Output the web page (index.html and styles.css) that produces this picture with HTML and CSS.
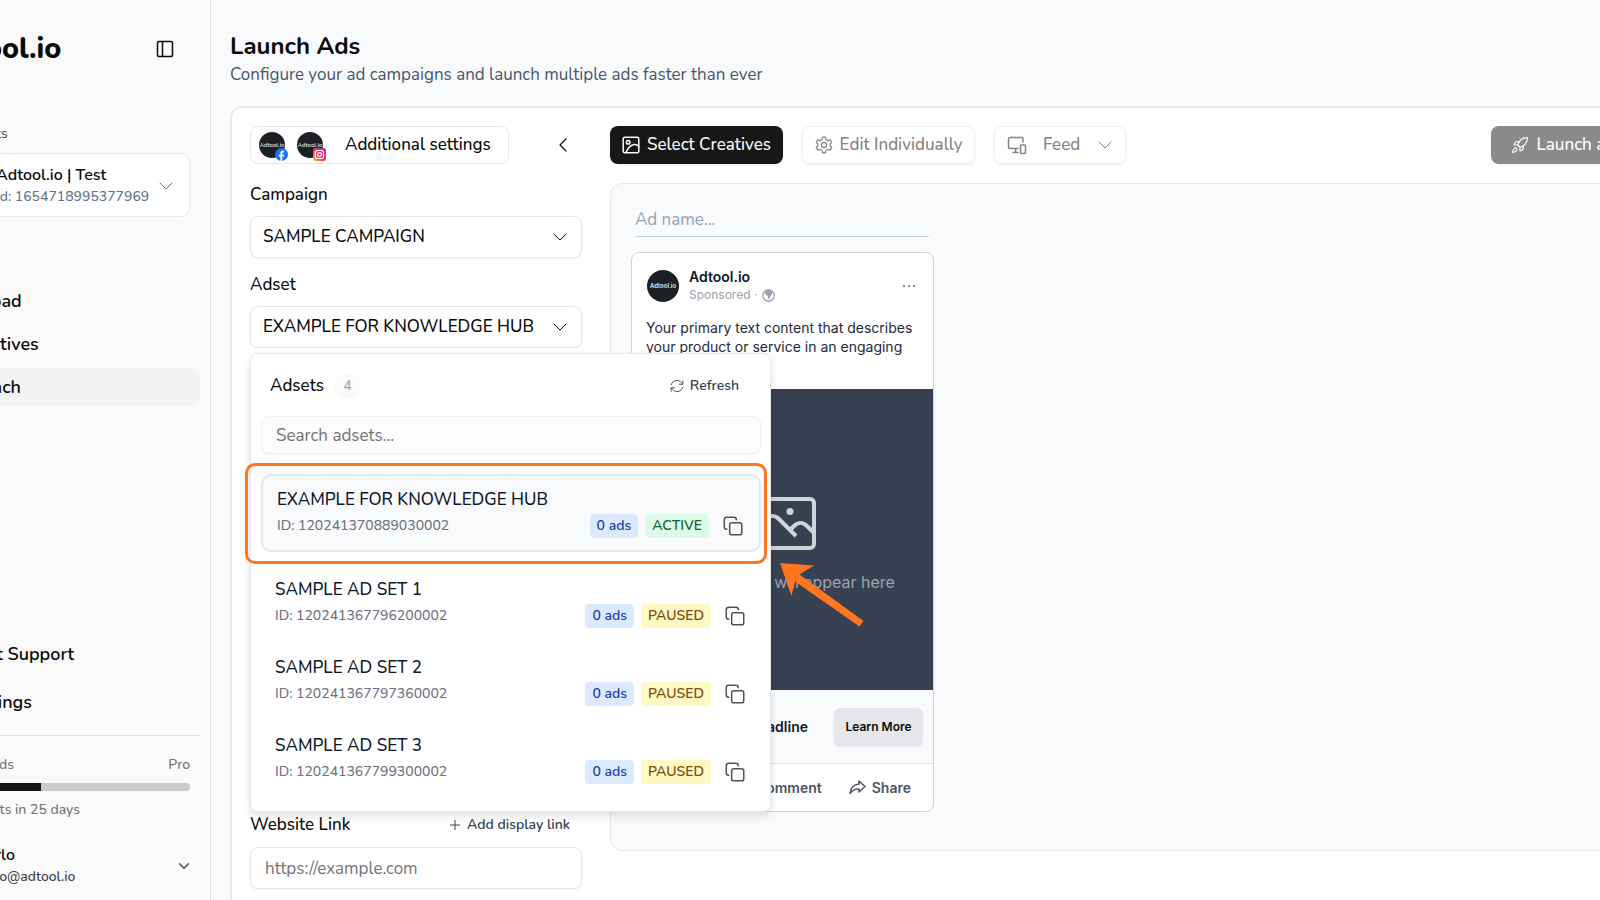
FILE: index.html
```html
<!DOCTYPE html>
<html lang="en">
<head>
    <meta charset="UTF-8">
    <meta name="viewport" content="width=device-width, initial-scale=1.0">
    <title>Adtool.io - Launch Ads</title>
    <link rel="stylesheet" href="styles.css">
</head>
<body>
    <!-- shared icons -->
    <svg class="sprite" aria-hidden="true">
        <symbol id="chevron-down" viewBox="0 0 24 24"><path d="M3 7.5l9 9 9-9"/></symbol>
        <symbol id="copy" viewBox="0 0 24 24"><rect x="8" y="8" width="14.5" height="14.5" rx="2.5"/><path d="M4.500 16c-1.700 0-3-1.300-3-3V4.500c0-1.700 1.300-3 3-3H13c1.700 0 3 1.300 3 3"/></symbol>
    </svg>

    <div class="app">
        <aside class="sidebar">
            <div class="brand">
                <a href="#" class="logo">Adtool.io</a>
                <button type="button" class="icon-btn" aria-label="Toggle sidebar">
                    <svg class="icon" width="18" height="18" viewBox="0 0 18 18"><rect x="1.500" y="1.500" width="15" height="15" rx="1.500"/><path d="M6.500 1.500v15"/></svg>
                </button>
            </div>

            <p class="section-label">Ad accounts</p>
            <button type="button" class="account">
                <span class="account-text">
                    <span class="account-name">Adtool.io | Test</span>
                    <span class="account-id">Id: 1654718995377969</span>
                </span>
                <svg class="icon" width="16" height="16"><use href="#chevron-down"/></svg>
            </button>

            <nav class="nav">
                <a href="#">Upload</a>
                <a href="#">Creatives</a>
                <a href="#" class="active">Launch</a>
            </nav>

            <nav class="nav nav-bottom">
                <a href="#">Chat Support</a>
                <a href="#">Settings</a>
            </nav>

            <div class="usage">
                <div class="usage-head"><span>Launched Ads</span><span>Pro</span></div>
                <div class="bar"><div class="bar-fill" style="width: 44%"></div></div>
                <p>Credits resets in 25 days</p>
            </div>

            <button type="button" class="user">
                <span class="user-text">
                    <span class="user-name">Carlo</span>
                    <span class="user-mail">carlo@adtool.io</span>
                </span>
                <svg class="icon" width="12" height="12"><use href="#chevron-down"/></svg>
            </button>
        </aside>

        <main class="main">
            <h1>Launch Ads</h1>
            <p class="subtitle">Configure your ad campaigns and launch multiple ads faster than ever</p>

            <div class="panel">
                <div class="settings">
                    <div class="settings-head">
                        <button type="button" class="additional">
                            <span class="avatar">Adtool.io
                                <svg class="social" width="13" height="13" viewBox="0 0 24 24"><circle cx="12" cy="12" r="12" fill="#1877f2"/><path d="M10 24v-8.500H7V12h3V9.500C10 6.500 11.800 5 14.400 5c1.200 0 2.200.200 2.200.200v2.900h-1.400c-1.500 0-1.900.900-1.900 1.800V12h3.200l-.500 3.500h-2.700V24z" fill="#fff"/></svg>
                            </span>
                            <span class="avatar">Adtool.io
                                <svg class="social" width="13" height="13" viewBox="0 0 24 24">
                                    <defs><linearGradient id="insta" x1="0" y1="1" x2="1" y2="0"><stop offset="0" stop-color="#ffc14a"/><stop offset=".45" stop-color="#f9354a"/><stop offset="1" stop-color="#9b2be0"/></linearGradient></defs>
                                    <rect width="24" height="24" rx="5" fill="url(#insta)"/>
                                    <g fill="none" stroke="#fff" stroke-width="2"><rect x="4.500" y="4.500" width="15" height="15" rx="4"/><circle cx="12" cy="12" r="3.500"/></g>
                                </svg>
                            </span>
                            <span class="additional-label">Additional settings</span>
                        </button>
                        <button type="button" class="icon-btn" aria-label="Collapse settings">
                            <svg class="icon" width="16" height="16" viewBox="0 0 16 16"><path d="M11 2L5 8l6 6"/></svg>
                        </button>
                    </div>

                    <div class="field">
                        <label for="campaign">Campaign</label>
                        <div class="select">
                            <select id="campaign"><option>SAMPLE CAMPAIGN</option></select>
                            <svg class="icon" width="16" height="16"><use href="#chevron-down"/></svg>
                        </div>
                    </div>

                    <div class="field">
                        <label for="adset">Adset</label>
                        <div class="select">
                            <select id="adset"><option>EXAMPLE FOR KNOWLEDGE HUB</option></select>
                            <svg class="icon" width="16" height="16"><use href="#chevron-down"/></svg>
                        </div>

                        <div class="dropdown">
                            <div class="dropdown-head">
                                <span>Adsets</span>
                                <span class="count">4</span>
                                <button type="button" class="refresh">
                                    <svg class="icon" width="14" height="14" viewBox="0 0 24 24"><path d="M2 10C3 5.500 7 2.500 12 2.500c4.300 0 7 2.500 9.500 6M22 3v6h-6M22 14c-1 4.500-5 7.500-10 7.500-4.300 0-7-2.500-9.500-6M2 21v-6h6"/></svg>
                                    Refresh
                                </button>
                            </div>
                            <input type="text" class="search" placeholder="Search adsets..." aria-label="Search adsets">
                            <ul class="adsets">
                                <li class="adset selected">
                                    <p class="adset-name">EXAMPLE FOR KNOWLEDGE HUB</p>
                                    <div class="adset-meta">
                                        <span class="adset-id">ID: 120241370889030002</span>
                                        <span class="badge ads">0 ads</span>
                                        <span class="badge on">ACTIVE</span>
                                        <button type="button" class="icon-btn" aria-label="Copy ID"><svg class="icon" width="20" height="20"><use href="#copy"/></svg></button>
                                    </div>
                                </li>
                                <li class="adset">
                                    <p class="adset-name">SAMPLE AD SET 1</p>
                                    <div class="adset-meta">
                                        <span class="adset-id">ID: 120241367796200002</span>
                                        <span class="badge ads">0 ads</span>
                                        <span class="badge paused">PAUSED</span>
                                        <button type="button" class="icon-btn" aria-label="Copy ID"><svg class="icon" width="20" height="20"><use href="#copy"/></svg></button>
                                    </div>
                                </li>
                                <li class="adset">
                                    <p class="adset-name">SAMPLE AD SET 2</p>
                                    <div class="adset-meta">
                                        <span class="adset-id">ID: 120241367797360002</span>
                                        <span class="badge ads">0 ads</span>
                                        <span class="badge paused">PAUSED</span>
                                        <button type="button" class="icon-btn" aria-label="Copy ID"><svg class="icon" width="20" height="20"><use href="#copy"/></svg></button>
                                    </div>
                                </li>
                                <li class="adset">
                                    <p class="adset-name">SAMPLE AD SET 3</p>
                                    <div class="adset-meta">
                                        <span class="adset-id">ID: 120241367799300002</span>
                                        <span class="badge ads">0 ads</span>
                                        <span class="badge paused">PAUSED</span>
                                        <button type="button" class="icon-btn" aria-label="Copy ID"><svg class="icon" width="20" height="20"><use href="#copy"/></svg></button>
                                    </div>
                                </li>
                            </ul>
                            <div class="highlight"></div>
                            <svg class="arrow" width="86" height="66" viewBox="0 0 86 66"><path d="M1 1l34 2.500-14.500 9L84.500 59l-4 5.500L16 19.500 12.500 34z" fill="#ff761f"/></svg>
                        </div>
                    </div>

                    <div class="field website">
                        <div class="website-head">
                            <label for="website">Website Link</label>
                            <button type="button" class="add-link">
                                <svg class="icon" width="10" height="10" viewBox="0 0 10 10"><path d="M5 0v10M0 5h10"/></svg>
                                Add display link
                            </button>
                        </div>
                        <input type="text" id="website" placeholder="https://example.com">
                    </div>
                </div>

                <div class="workspace">
                    <div class="toolbar">
                        <button type="button" class="btn dark">
                            <svg class="icon" width="18" height="18" viewBox="0 0 18 18"><rect x="1.200" y="1.200" width="15.600" height="15.600" rx="1.500"/><circle cx="6.200" cy="6.200" r="1.800"/><path d="M4 16.500C6 12 9 9 12 8.500c2-.300 3.500.500 4.800 2"/></svg>
                            Select Creatives
                        </button>
                        <button type="button" class="btn muted">
                            <svg class="icon" width="18" height="18" viewBox="0 0 24 24"><path d="M10 1.500h4l.700 3.200 2.500 1.500 3.200-1 2 3.500L20 11v2l2.400 2.300-2 3.500-3.200-1-2.500 1.500-.700 3.200h-4l-.700-3.200-2.500-1.500-3.200 1-2-3.500L4 13v-2L1.600 8.700l2-3.500 3.200 1 2.500-1.500z"/><circle cx="12" cy="12" r="3.500"/></svg>
                            Edit Individually
                        </button>
                        <div class="feed">
                            <svg class="icon" width="20" height="20" viewBox="0 0 20 20"><path d="M11 13.500H3c-1 0-1.500-.500-1.500-1.500V4c0-1 .500-1.500 1.500-1.500h11.500c1 0 1.500.500 1.500 1.500v3M8.500 13.500v4M6 17.500h5"/><rect x="13.500" y="10" width="5" height="8.500" rx="1"/></svg>
                            <select aria-label="Placement"><option>Feed</option></select>
                            <svg class="icon" width="16" height="16"><use href="#chevron-down"/></svg>
                        </div>
                        <button type="button" class="btn launch">
                            <svg class="icon" width="18" height="18" viewBox="0 0 24 24"><path d="M9 12c1.500-5 6-10 13-10 0 6.500-4.500 11.500-10 13zM9 12H4c.500-3 3-5 7-4.500M12 15v5c3-.500 5-3 4.500-7M9 12l3 3M4.500 16.500C2.500 18 2 22 2 22s4-.500 5.500-2.500c.900-1.200.700-2.300-.100-3-.800-.800-2-.800-2.900 0z"/></svg>
                            Launch ads
                        </button>
                    </div>

                    <div class="preview">
                        <input type="text" class="ad-name" placeholder="Ad name..." aria-label="Ad name">
                        <article class="ad">
                            <header class="ad-head">
                                <span class="avatar large">Adtool.io</span>
                                <div class="ad-title">
                                    <strong>Adtool.io</strong>
                                    <span class="sponsored">Sponsored · <svg width="13" height="13" viewBox="0 0 12 12"><circle cx="6" cy="6" r="5.300" fill="none" stroke="#9ca3af" stroke-width="1.200"/><path d="M2.500 2.500L6 1l3.500 1.500L9 5 7.500 7 7 9.500 5.500 8.500V6.500L3 5z" fill="#9ca3af"/></svg></span>
                                </div>
                                <svg class="dots" width="14" height="4" viewBox="0 0 14 4" fill="#64748b"><circle cx="2" cy="2" r="1.100"/><circle cx="7" cy="2" r="1.100"/><circle cx="12" cy="2" r="1.100"/></svg>
                            </header>
                            <p class="ad-text">Your primary text content that describes your product or service in an engaging way</p>
                            <div class="ad-media">
                                <svg width="66" height="53" viewBox="0 0 66 53" fill="none" stroke="#d1d5db" stroke-width="4"><rect x="2" y="2" width="62" height="49" rx="4"/><circle cx="40" cy="14.500" r="3.500" fill="#d1d5db" stroke="none"/><path d="M3 36l13-14c4-4 9-4 13 0l17 17M40 33l4-4c4-4 9-4 13 0l7 7"/></svg>
                                <p>Your creative will appear here</p>
                            </div>
                            <div class="ad-cta">
                                <strong>Your Headline</strong>
                                <button type="button">Learn More</button>
                            </div>
                            <footer class="ad-actions">
                                <a href="#">Like</a>
                                <a href="#">Comment</a>
                                <a href="#"><svg class="icon" width="17" height="15" viewBox="0 0 17 15"><path d="M10 1l6 5.500-6 5.500V9C6 8.500 3.500 10 1 13.500 1.500 8.500 4.500 4.500 10 4z"/></svg>Share</a>
                            </footer>
                        </article>
                    </div>
                </div>
            </div>
        </main>
    </div>
</body>
</html>
```
FILE: styles.css
```css
* {
    margin: 0;
    padding: 0;
    box-sizing: border-box;
}

body {
    font-family: Nunito, Lato, sans-serif;
    font-size: 17px;
    line-height: 20px;
    font-weight: 500;
    color: #0a0a0a;
    background-color: #f8fafc;
    overflow: hidden;
}

button,
input,
select {
    font: inherit;
    color: inherit;
    background: none;
    border: none;
}

button {
    cursor: pointer;
}

input {
    font-weight: 400;
}

a {
    color: inherit;
    text-decoration: none;
}

.sprite {
    position: absolute;
    width: 0;
    height: 0;
}

.icon {
    flex: none;
    fill: none;
    stroke: currentColor;
    stroke-width: 1.5;
    stroke-linecap: round;
    stroke-linejoin: round;
}

.icon-btn {
    display: flex;
    align-items: center;
    justify-content: center;
    width: 24px;
    height: 24px;
}

.app {
    display: flex;
    height: 100vh;
    overflow: hidden;
}

/* Sidebar */
.sidebar {
    flex: none;
    display: flex;
    flex-direction: column;
    width: 311px;
    margin-left: -100px;
    padding: 29px 10px 13px;
    background-color: #fafafa;
    border-right: 1px solid #dfe1e6;
}

.brand {
    display: flex;
    align-items: center;
    justify-content: space-between;
    height: 40px;
    padding: 0 23px 0 24px;
}

.logo {
    font-size: 29px;
    font-weight: 800;
}

.section-label {
    margin-top: 55px;
    padding-left: 20px;
    font-size: 14px;
    color: #525252;
}

.account {
    display: flex;
    align-items: center;
    justify-content: space-between;
    height: 64px;
    margin: 9px 10px 0;
    padding: 2px 15px 0 75px;
    text-align: left;
    background-color: #fff;
    border: 1px solid #e5e7eb;
    border-radius: 10px;
}

.account-text,
.user-text {
    display: flex;
    flex-direction: column;
    gap: 2px;
}

.account-name,
.user-name {
    font-size: 16px;
    font-weight: 600;
}

.account-id,
.account .icon {
    color: #64748b;
}

.account-id {
    font-size: 14px;
}

.nav {
    display: flex;
    flex-direction: column;
    gap: 5px;
    margin-top: 65px;
    font-size: 18px;
    font-weight: 600;
}

.nav a {
    padding: 9px 0 9px 52px;
    border-radius: 8px;
}

.nav .active {
    background-color: #f4f4f5;
}

.nav-bottom {
    gap: 10px;
    margin-top: auto;
    padding-bottom: 14px;
}

.nav-bottom a {
    padding-left: 54px;
}

.usage {
    padding: 19px 10px 0 14px;
    font-size: 14px;
    color: #737373;
    border-top: 1px solid #e5e5e5;
}

.usage-head {
    display: flex;
    justify-content: space-between;
}

.bar {
    height: 8px;
    margin: 8px 0 9px;
    overflow: hidden;
    background-color: #cbcbcb;
    border-radius: 4px;
}

.bar-fill {
    height: 100%;
    background-color: #171717;
}

.user {
    display: flex;
    align-items: center;
    justify-content: space-between;
    margin-top: 25px;
    padding: 0 10px 0 66px;
    text-align: left;
}

.user-mail {
    font-size: 14px;
    color: #404040;
}

.user .icon {
    stroke-width: 2.5;
    color: #404040;
}

/* Main */
.main {
    flex: 1;
    min-width: 0;
    padding: 30px 0 0 19px;
}

h1 {
    font-size: 24px;
    line-height: 32px;
    font-weight: 700;
}

.subtitle {
    margin-top: 3px;
    font-weight: 400;
    color: #475569;
}

/* the panel runs on past the right edge of the window */
.panel {
    display: flex;
    gap: 28px;
    min-height: 900px;
    margin: 21px -64px 0 0;
    padding: 18px;
    background-color: #fff;
    border: 2px solid #e9ebee;
    border-radius: 12px;
}

.settings {
    flex: none;
    width: 332px;
}

.settings-head {
    display: flex;
    align-items: center;
    justify-content: space-between;
    padding-right: 7px;
}

.settings-head .icon {
    stroke-width: 1.2;
}

.additional {
    display: flex;
    align-items: center;
    gap: 12px;
    height: 38px;
    padding: 0 17px 0 8px;
    border: 1px solid #e5e7eb;
    border-radius: 8px;
}

.additional-label {
    margin-left: 10px;
}

.avatar {
    position: relative;
    flex: none;
    width: 26px;
    height: 26px;
    font-size: 6px;
    line-height: 26px;
    font-weight: 600;
    text-align: center;
    color: #e5e5e5;
    background-color: #1c1f24;
    border-radius: 50%;
}

.avatar.large {
    width: 32px;
    height: 32px;
    line-height: 32px;
}

.social {
    position: absolute;
    right: -3px;
    bottom: -3px;
}

.field {
    position: relative;
    margin-top: 17px;
}

.settings-head + .field {
    margin-top: 21px;
}

.field label {
    display: block;
}

.select {
    position: relative;
    margin-top: 11px;
}

.select select,
.website input {
    appearance: none;
    display: block;
    width: 100%;
    height: 42px;
    padding: 0 40px 0 12px;
    background-color: #fff;
    border: 1px solid #e5e7eb;
    border-radius: 8px;
    box-shadow: 0 1px 2px rgba(0, 0, 0, 0.05);
}

.select .icon {
    position: absolute;
    top: 13px;
    right: 14px;
    pointer-events: none;
}

/* Adset dropdown */
.dropdown {
    position: absolute;
    top: 78px;
    left: 0;
    z-index: 10;
    width: 521px;
    padding: 20px 9px 15px 10px;
    background-color: #fff;
    border: 1px solid #e5e7eb;
    border-radius: 8px;
    box-shadow: 0 4px 8px rgba(0, 0, 0, 0.12);
}

.dropdown-head {
    display: flex;
    align-items: center;
    height: 24px;
    padding: 0 22px 0 9px;
}

.count {
    width: 27px;
    margin-left: 10px;
    font-size: 14px;
    line-height: 24px;
    text-align: center;
    color: #94a3b8;
    background-color: #f8fafc;
    border-radius: 12px;
}

.refresh {
    display: flex;
    align-items: center;
    gap: 6px;
    margin-left: auto;
    font-size: 14px;
    font-weight: 600;
    color: #334155;
}

.search {
    width: 100%;
    height: 38px;
    margin-top: 18px;
    padding: 0 14px;
    background-color: #fcfcfc;
    border: 1px solid #f0f0f1;
    border-radius: 8px;
    box-shadow: 0 1px 2px rgba(0, 0, 0, 0.04);
}

::placeholder {
    color: #737373;
    opacity: 1;
}

.adsets {
    display: flex;
    flex-direction: column;
    gap: 4px;
    margin-top: 20px;
    list-style: none;
}

.adset {
    padding: 12px 14px;
    border-radius: 10px;
}

.adset.selected {
    margin-bottom: 10px;
    background-color: #f8fafc;
    border: 2px solid #e5e7eb;
}

.adset-name {
    line-height: 24px;
    color: #0f172a;
}

.adset-meta {
    display: flex;
    align-items: center;
    gap: 7px;
    margin-top: 2px;
    font-size: 14px;
    line-height: 24px;
}

.adset-id {
    margin-right: auto;
    color: #6b7280;
}

.adset-meta .icon-btn {
    margin-left: 5px;
    color: #525252;
}

.adset-meta .icon {
    stroke-width: 1.8;
}

.badge {
    padding: 0 7px;
    font-weight: 600;
    border-radius: 4px;
}

.badge.ads {
    color: #1e40af;
    background-color: #dbeafe;
}

.badge.on {
    color: #166534;
    background-color: #dcfce7;
}

.badge.paused {
    color: #854d0e;
    background-color: #fef9c3;
}

.highlight {
    position: absolute;
    top: 109px;
    left: -6px;
    width: 522px;
    height: 101px;
    border: 3px solid #ff761f;
    border-radius: 10px;
}

.arrow {
    position: absolute;
    top: 208px;
    left: 528px;
}

/* Website link */
.field.website {
    margin-top: 467px;
}

.website-head {
    display: flex;
    justify-content: space-between;
    padding-right: 12px;
}

.add-link {
    display: flex;
    align-items: center;
    gap: 7px;
    font-size: 14px;
    font-weight: 600;
    color: #334155;
}

.add-link .icon {
    stroke-width: 1;
}

.website input {
    margin-top: 12px;
    padding: 0 14px;
}

/* Workspace */
.workspace {
    flex: 1;
    min-width: 0;
}

.toolbar {
    display: flex;
    gap: 19px;
    height: 38px;
}

.btn,
.feed {
    display: flex;
    align-items: center;
    justify-content: center;
    gap: 7px;
    border-radius: 8px;
    box-shadow: 0 1px 3px rgba(0, 0, 0, 0.08);
}

.btn.dark {
    width: 173px;
    color: #fafafa;
    background-color: #171717;
}

.btn.muted {
    width: 173px;
}

.btn.muted,
.feed {
    color: #848484;
    border: 1px solid #f1f1f2;
}

.feed {
    width: 132px;
    gap: 16px;
}

.feed select {
    appearance: none;
    width: 38px;
}

.btn.launch {
    margin-left: auto;
    width: 153px;
    color: #fff;
    background-color: #8b8b8b;
}

.preview {
    margin-top: 19px;
    min-height: 668px;
    padding: 17px 20px;
    background-color: #f8fafc;
    border: 1px solid #e5e7eb;
    border-radius: 12px;
}

.ad-name {
    display: block;
    width: 294px;
    height: 36px;
    margin-left: 4px;
    padding-top: 2px;
    border-bottom: 1px solid #cbd5e1;
}

.ad-name::placeholder {
    color: #94a3b8;
}

.ad {
    width: 303px;
    margin-top: 15px;
    overflow: hidden;
    font-family: Inter, sans-serif;
    font-size: 14px;
    font-weight: 400;
    background-color: #fff;
    border: 1px solid #d1d5db;
    border-radius: 8px;
}

.ad-head {
    display: flex;
    align-items: center;
    gap: 10px;
    padding: 15px 17px 0 15px;
}

.ad-title {
    display: flex;
    flex-direction: column;
    line-height: 18px;
}

.ad-title strong {
    font-weight: 600;
    color: #0f172a;
}

.sponsored {
    display: flex;
    align-items: center;
    gap: 5px;
    font-size: 12px;
    color: #9ca3af;
}

.dots {
    margin-left: auto;
}

.ad-text {
    height: 71px;
    margin-top: 14px;
    padding: 0 14px;
    line-height: 19px;
    color: #1e293b;
}

.ad-media {
    display: flex;
    flex-direction: column;
    align-items: center;
    gap: 22px;
    height: 301px;
    padding-top: 108px;
    font-size: 16px;
    color: #9ca3af;
    background-color: #374151;
}

.ad-cta {
    display: flex;
    align-items: center;
    justify-content: space-between;
    height: 74px;
    padding: 0 10px 0 14px;
    background-color: #f8fafc;
    border-bottom: 1px solid #e5e7eb;
}

.ad-cta strong {
    width: 162px;
    font-weight: 600;
    text-align: right;
    color: #0f172a;
}

.ad-cta button {
    width: 89px;
    height: 38px;
    font-size: 12px;
    font-weight: 600;
    background-color: #e5e7eb;
    border-radius: 6px;
    box-shadow: 0 1px 2px rgba(0, 0, 0, 0.08);
}

.ad-actions {
    display: flex;
    align-items: center;
    justify-content: flex-end;
    gap: 27px;
    height: 47px;
    padding-right: 22px;
    font-weight: 600;
    color: #4b5563;
}

.ad-actions a {
    display: flex;
    align-items: center;
    gap: 6px;
}
```
